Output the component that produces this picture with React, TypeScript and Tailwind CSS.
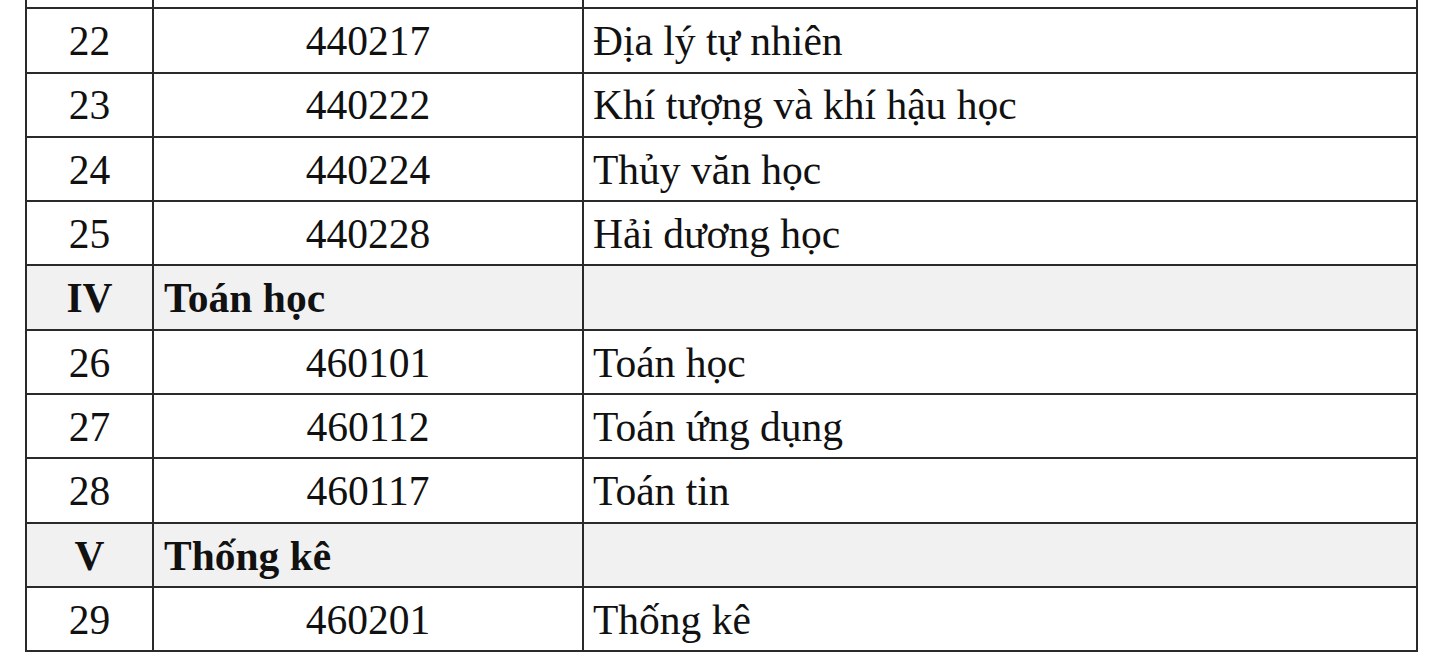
const rows: { a: string; b: string; c: string; head?: boolean }[] = [
  { a: '', b: '', c: '' },
  { a: '22', b: '440217', c: 'Địa lý tự nhiên' },
  { a: '23', b: '440222', c: 'Khí tượng và khí hậu học' },
  { a: '24', b: '440224', c: 'Thủy văn học' },
  { a: '25', b: '440228', c: 'Hải dương học' },
  { a: 'IV', b: 'Toán học', c: '', head: true },
  { a: '26', b: '460101', c: 'Toán học' },
  { a: '27', b: '460112', c: 'Toán ứng dụng' },
  { a: '28', b: '460117', c: 'Toán tin' },
  { a: 'V', b: 'Thống kê', c: '', head: true },
  { a: '29', b: '460201', c: 'Thống kê' },
];

export default function App() {
  return (
    <div className="h-[664px] w-[1440px] overflow-hidden bg-white">
      <table
        className="ml-[25px] mt-[-57px] table-fixed border-collapse text-[41.5px] leading-none text-[#111]"
        style={{ fontFamily: '"Liberation Serif", "Times New Roman", serif' }}
      >
        <colgroup>
          <col className="w-[127px]" />
          <col className="w-[430px]" />
          <col className="w-[834px]" />
        </colgroup>
        <tbody>
          {rows.map((r, i) => (
            <tr key={i} className={r.head ? 'h-[64.3px] bg-[#f1f1f1]' : 'h-[64.3px]'}>
              <td
                className={
                  r.head
                    ? 'border-2 border-[#2a2a2a] pt-[3px] text-center font-bold'
                    : 'border-2 border-[#2a2a2a] pt-[3px] text-center'
                }
              >
                {r.a}
              </td>
              <td
                className={
                  r.head
                    ? 'border-2 border-[#2a2a2a] pl-[10px] pt-[3px] text-left font-bold'
                    : 'border-2 border-[#2a2a2a] pt-[3px] text-center'
                }
              >
                {r.b}
              </td>
              <td className="border-2 border-[#2a2a2a] pl-[9px] pt-[3px] text-left">{r.c}</td>
            </tr>
          ))}
        </tbody>
      </table>
    </div>
  );
}
